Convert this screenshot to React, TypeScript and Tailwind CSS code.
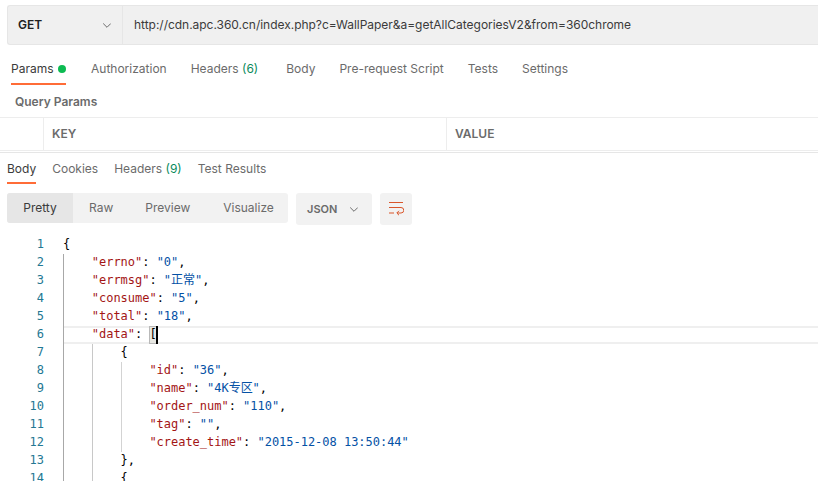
import React from "react";

const ui = "font-['Inter','Noto_Sans_CJK_SC',sans-serif]";

function Chevron() {
  return (
    <svg width="8" height="5" viewBox="0 0 8 5" fill="none">
      <path d="M.2 .5 4 4.300 7.800 .5" stroke="#6b6b6b" strokeWidth="1" />
    </svg>
  );
}

function WrapIcon() {
  return (
    <svg width="15" height="14" viewBox="0 0 15 14" fill="none">
      <path d="M0 .5h14M0 5.500h12a2.500 2.500 0 0 1 0 5.500H8M0 11h5M10 8.800 7.800 11l2.200 2.200" stroke="#d9562b" strokeWidth="1" />
    </svg>
  );
}

type Seg = [string, "k" | "s" | "p" | "b"];
const lines: { guides: number; segs: Seg[]; active?: boolean }[] = [
  { guides: 0, segs: [["{", "p"]] },
  { guides: 1, segs: [['"errno"', "k"], [": ", "p"], ['"0"', "s"], [",", "p"]] },
  { guides: 1, segs: [['"errmsg"', "k"], [": ", "p"], ['"正常"', "s"], [",", "p"]] },
  { guides: 1, segs: [['"consume"', "k"], [": ", "p"], ['"5"', "s"], [",", "p"]] },
  { guides: 1, segs: [['"total"', "k"], [": ", "p"], ['"18"', "s"], [",", "p"]] },
  { guides: 1, segs: [['"data"', "k"], [": ", "p"], ["[", "b"]], active: true },
  { guides: 2, segs: [["{", "p"]] },
  { guides: 3, segs: [['"id"', "k"], [": ", "p"], ['"36"', "s"], [",", "p"]] },
  { guides: 3, segs: [['"name"', "k"], [": ", "p"], ['"4K专区"', "s"], [",", "p"]] },
  { guides: 3, segs: [['"order_num"', "k"], [": ", "p"], ['"110"', "s"], [",", "p"]] },
  { guides: 3, segs: [['"tag"', "k"], [": ", "p"], ['""', "s"], [",", "p"]] },
  { guides: 3, segs: [['"create_time"', "k"], [": ", "p"], ['"2015-12-08 13:50:44"', "s"]] },
  { guides: 2, segs: [["}", "p"], [",", "p"]] },
  { guides: 2, segs: [["{", "p"]] },
];

function CodeLine({ n, line }: { n: number; line: (typeof lines)[number] }) {
  return (
    <div className="flex h-[18px] items-stretch">
      <div className="w-[63px] shrink-0 pr-[19px] text-right leading-[16px] text-[#237893]">{n}</div>
      <div className="relative flex flex-1 items-stretch leading-[16px]">
        {line.active ? (
          <div className="absolute bottom-0 left-[1px] right-0 top-0 border-y-2 border-[#efefef]" />
        ) : null}
        {line.guides > 0 ? <span className="w-[28.8px] shrink-0 border-l border-[#a8a8a8]" /> : null}
        {line.guides > 1 ? <span className="w-[28.8px] shrink-0 border-l border-[#c8c8c8]" /> : null}
        {line.guides > 2 ? <span className="w-[28.8px] shrink-0 border-l border-[#d3d3d3]" /> : null}
        <span className="relative whitespace-pre">
          {line.segs.map(([t, c], i) =>
            c === "b" ? (
              <span key={i} className="relative inline-block w-[7.2px] text-black">
                <span className="absolute left-0 top-0 h-[18px] w-[8px] border border-[#b9b9b9] bg-[#e8e8e3]" />
                <span className="relative">{t}</span>
                <span className="absolute left-[7px] top-0 h-[18px] w-[2px] bg-black" />
              </span>
            ) : (
              <span key={i} className={c === "k" ? "text-[#a31515]" : c === "s" ? "text-[#0451a5]" : "text-black"}>
                {t}
              </span>
            )
          )}
        </span>
      </div>
    </div>
  );
}

export default function App() {
  return (
    <div className={`h-[484px] w-[818px] overflow-hidden bg-white ${ui} text-[13px] text-[#6b6b6b]`}>
      <div className="pl-[7px] pt-[5px]">
        <div className="flex h-[40px] rounded-l-[3px] border border-r-0 border-[#e6e6e6] bg-[#f0f0f0]">
          <div className="flex w-[115px] items-center justify-between border-r border-[#e6e6e6] pl-[10px] pr-[11px]">
            <span className="text-[12px] font-semibold text-[#212121]">GET</span>
            <Chevron />
          </div>
          <div className="flex items-center pl-[11px] text-[12px] tracking-[-0.025px] text-[#3b3b3b]">
            http://cdn.apc.360.cn/index.php?c=WallPaper&amp;a=getAllCategoriesV2&amp;from=360chrome
          </div>
        </div>
      </div>

      <div className="flex h-[40px] pl-[11px] text-[12px]">
        <div className="flex h-[40px] w-[55px] items-center justify-between border-b-2 border-[#ff6c37] pt-[10px] text-[#3b3b3b]">
          <span>Params</span>
          <span className="h-[8px] w-[8px] rounded-full bg-[#0cbb52]" />
        </div>
        <div className="ml-[25px] flex items-center pt-[10px] pb-[2px]">Authorization</div>
        <div className="ml-[24px] flex items-center pt-[10px] pb-[2px]">Headers&nbsp;<span className="text-[#0a8a5c]">(6)</span></div>
        <div className="ml-[28px] flex items-center pt-[10px] pb-[2px]">Body</div>
        <div className="ml-[24px] flex items-center pt-[10px] pb-[2px]">Pre-request Script</div>
        <div className="ml-[24px] flex items-center pt-[10px] pb-[2px]">Tests</div>
        <div className="ml-[24px] flex items-center pt-[10px] pb-[2px]">Settings</div>
      </div>

      <div className="flex h-[32px] items-center pl-[15px] pt-[2px] text-[12px] font-semibold">Query Params</div>

      <div className="flex h-[34px] border-y border-[#ededed] text-[12px] font-semibold">
        <div className="w-[44px] border-r border-[#ededed]" />
        <div className="flex w-[403px] items-center border-r border-[#ededed] pl-[8px]">KEY</div>
        <div className="flex items-center pl-[8px]">VALUE</div>
      </div>
      <div className="h-[2px] border-b border-[#e6e6e6]" />

      <div className="flex h-[31px] pl-[7px] text-[12px]">
        <div className="flex h-[31px] items-center border-b-2 border-[#ff6c37] pt-[2px] text-[#3b3b3b]">Body</div>
        <div className="ml-[16px] flex items-center">Cookies</div>
        <div className="ml-[16px] flex items-center">Headers&nbsp;<span className="text-[#0a8a5c]">(9)</span></div>
        <div className="ml-[16px] flex items-center">Test Results</div>
      </div>

      <div className="mt-[9px] flex h-[32px] items-start pl-[7px] text-[12px]">
        <div className="flex h-[30px] w-[281px] overflow-hidden rounded-[3px] bg-[#f2f2f2]">
          <div className="flex w-[66px] items-center justify-center bg-[#e6e6e6] text-[#3b3b3b]">Pretty</div>
          <div className="ml-[16px] flex items-center">Raw</div>
          <div className="ml-[32px] flex items-center">Preview</div>
          <div className="ml-[33px] flex items-center">Visualize</div>
        </div>
        <div className="ml-[8px] flex h-[32px] w-[76px] items-center justify-between rounded-[3px] bg-[#f2f2f2] pl-[11px] pr-[14px] text-[11px] font-semibold">
          <span>JSON</span>
          <Chevron />
        </div>
        <div className="ml-[8px] flex h-[32px] w-[32px] items-center justify-center rounded-[3px] bg-[#f2f2f2]">
          <WrapIcon />
        </div>
      </div>

      <div className="mt-[11px] h-[245px] overflow-hidden font-['DejaVu_Sans_Mono','Noto_Sans_CJK_SC',monospace] text-[12px] tracking-[-0.02px]">
        {lines.map((l, i) => (
          <CodeLine key={i} n={i + 1} line={l} />
        ))}
      </div>
    </div>
  );
}
